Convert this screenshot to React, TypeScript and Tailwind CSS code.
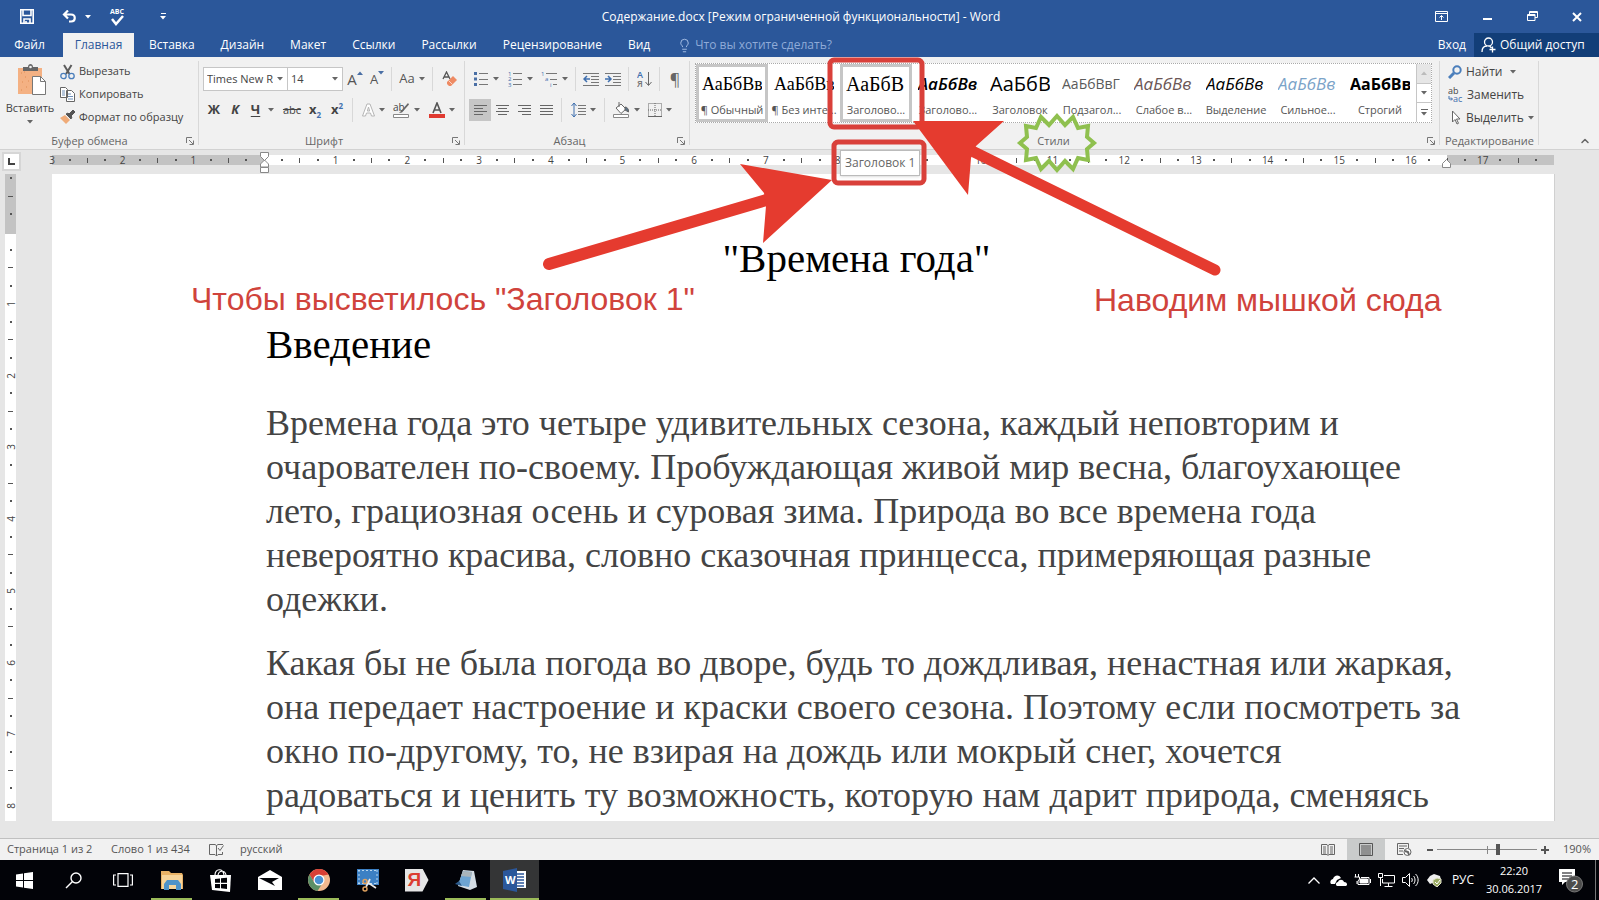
import type { ReactNode } from 'react';
import { ChevronUp, Lightbulb } from 'lucide-react';

const tabs = ['Вставка', 'Дизайн', 'Макет', 'Ссылки', 'Рассылки', 'Рецензирование', 'Вид'];

const styleItems = [
  { name: '¶ Обычный', sample: 'АаБбВвГ', look: 'font-["Liberation_Serif",serif] text-[18px] text-black', ring: true },
  { name: '¶ Без инте...', sample: 'АаБбВвГ', look: 'font-["Liberation_Serif",serif] text-[18px] text-black' },
  { name: 'Заголово...', sample: 'АаБбВ', look: 'font-["Liberation_Serif",serif] text-[20px] text-black', ring: true },
  { name: 'Заголово...', sample: 'АаБбВвГ', look: 'font-semibold italic text-[17px] text-black' },
  { name: 'Заголовок', sample: 'АаБбВ', look: 'text-[20px] text-black' },
  { name: 'Подзагол...', sample: 'АаБбВвГ', look: 'text-[14px] text-[#5a5a5a]' },
  { name: 'Слабое в...', sample: 'АаБбВв', look: 'italic text-[17px] text-[#6b5656]' },
  { name: 'Выделение', sample: 'АаБбВв', look: 'italic text-[17px] text-black' },
  { name: 'Сильное...', sample: 'АаБбВв', look: 'italic text-[17px] text-[#7ba3c8]' },
  { name: 'Строгий', sample: 'АаБбВв', look: 'font-bold text-[16px] text-black' },
];

const firstParagraph = [
  'Времена года это четыре удивительных сезона, каждый неповторим и',
  'очарователен по-своему. Пробуждающая живой мир весна, благоухающее',
  'лето, грациозная осень и суровая зима. Природа во все времена года',
  'невероятно красива, словно сказочная принцесса, примеряющая разные',
  'одежки.',
];

const secondParagraph = [
  'Какая бы не была погода во дворе, будь то дождливая, ненастная или жаркая,',
  'она передает настроение и краски своего сезона. Поэтому если посмотреть за',
  'окно по-другому, то, не взирая на дождь или мокрый снег, хочется',
  'радоваться и ценить ту возможность, которую нам дарит природа, сменяясь',
];

function Caret({ className = 'text-[#666]' }: { className?: string }) {
  return (
    <svg width="6" height="4" viewBox="0 0 6 4" className={`shrink-0 ${className}`}>
      <path d="M0 0h6L3 3.5z" fill="currentColor" />
    </svg>
  );
}

function Sep() {
  return <span className="mx-1 h-6 w-px shrink-0 bg-[#d8d8d8]" />;
}

function Launcher({ label }: { label: string }) {
  return (
    <button aria-label={label} className="absolute right-1 bottom-[3px] p-px">
      <svg width="8" height="8" viewBox="0 0 8 8" fill="none" stroke="#777">
        <path d="M.5 6V.5H6M3 3l4 4M7.500 3.500v4h-4" />
      </svg>
    </button>
  );
}

function Group({ name, className, launcher, children }: { name: string; className: string; launcher?: boolean; children: ReactNode }) {
  return (
    <section aria-label={name} className={`relative flex flex-col ${className}`}>
      <div className="flex-1">{children}</div>
      <h2 className={`h-4 text-center text-[11px] leading-4 whitespace-nowrap text-[#666] ${launcher ? 'pr-5' : ''}`}>{name}</h2>
      {launcher && <Launcher label={`Параметры: ${name}`} />}
      <span className="absolute top-1 right-0 bottom-1 w-px bg-[#d8d8d8]" />
    </section>
  );
}

function Tool({ label, className = 'w-[22px]', caret, children }: { label: string; className?: string; caret?: boolean; children: ReactNode }) {
  return (
    <button aria-label={label} className={`flex h-[22px] shrink-0 items-center justify-center gap-1 ${className}`}>
      {children}
      {caret && <Caret />}
    </button>
  );
}

function Lines({ d }: { d: string }) {
  return (
    <svg width="15" height="14" viewBox="0 0 15 14" fill="none" stroke="#666">
      <path d={d} />
    </svg>
  );
}

function Clipboard() {
  return (
    <Group name="Буфер обмена" className="w-[199px]" launcher>
      <div className="flex pt-[3px]">
        <button className="flex w-[60px] flex-col items-center pt-1 text-[11px] leading-4 text-[#444]">
          <svg width="30" height="32" viewBox="0 0 30 32" className="ml-1">
            <path d="M1 4h24v26H1z" fill="#f4b183" />
            <path d="M4 9h1M8 13h1M5 18h1M9 23h1M4 26h1M11 17h1M7 8h1" stroke="#e08d55" />
            <path d="M6 3h5c0-4 5-4 5 0h5v4H6z" fill="#666" />
            <circle cx="13.500" cy="3" r="1.300" fill="#f1f1f1" />
            <path d="M15.500 12.500h8l5 5v13h-13z" fill="#fff" stroke="#777" />
            <path d="M23.500 12.500v5h5" fill="none" stroke="#777" />
          </svg>
          <span className="mt-1">Вставить</span>
          <Caret className="mt-1 text-[#666]" />
        </button>
        <div className="flex flex-col text-[11px] text-[#444]">
          <button className="flex h-[23px] items-center gap-1 whitespace-nowrap">
            <svg width="15" height="16" viewBox="0 0 15 16" fill="none">
              <path d="M4 1l5.500 9M11.500 1L6 10" stroke="#5c5c5c" strokeWidth="2" />
              <circle cx="3.500" cy="12" r="2.700" stroke="#4a7ebb" strokeWidth="1.300" />
              <circle cx="11.500" cy="12" r="2.700" stroke="#4a7ebb" strokeWidth="1.300" />
            </svg>
            Вырезать
          </button>
          <button className="flex h-[23px] items-center gap-1 whitespace-nowrap">
            <svg width="15" height="15" viewBox="0 0 15 15" fill="#fff" stroke="#666">
              <path d="M.5.5h5l2 2v8h-7zM6.500 3.500h5l3 3v8h-8z" />
              <path d="M2 4h3M2 6h3M2 8h3M8 7h3M8 9.500h5M8 12h5" stroke="#6d8fb8" />
            </svg>
            Копировать
          </button>
          <button className="flex h-[23px] items-center gap-1 whitespace-nowrap">
            <svg width="15" height="15" viewBox="0 0 15 15">
              <path d="M5 5l5 5-4 4-6-6z" fill="#f0ab78" />
              <path d="M6 4l5 5 1-2-4-4zM9 4l4-4 2 2-4 4z" fill="#555" stroke="#555" />
            </svg>
            Формат по образцу
          </button>
        </div>
      </div>
    </Group>
  );
}

function FontGroup() {
  return (
    <Group name="Шрифт" className="w-[266px] pl-1" launcher>
      <div className="flex h-11 items-center">
        <div className="flex h-6 w-[85px] shrink-0 items-center border border-[#c6c6c6] bg-white pr-1">
          <input aria-label="Шрифт" defaultValue="Times New Roman" className="w-0 flex-1 pl-[3px] text-[11px] text-[#444] outline-none" />
          <Caret className="ml-1 text-[#666]" />
        </div>
        <div className="-ml-px flex h-6 w-[56px] shrink-0 items-center border border-[#c6c6c6] bg-white pr-1">
          <input aria-label="Размер шрифта" defaultValue="14" className="w-0 flex-1 pl-[3px] text-[11px] text-[#444] outline-none" />
          <Caret />
        </div>
        <Tool label="Увеличить размер" className="w-6">
          <span className="flex text-[15px] leading-4 text-[#555]">A<Caret className="rotate-180 text-[#4a6fa5]" /></span>
        </Tool>
        <Tool label="Уменьшить размер" className="w-5">
          <span className="flex text-[13px] leading-4 text-[#555]">A<Caret className="text-[#4a6fa5]" /></span>
        </Tool>
        <Sep />
        <Tool label="Регистр" className="w-8" caret><span className="text-[13px] text-[#555]">Aa</span></Tool>
        <Sep />
        <Tool label="Очистить формат" className="w-6">
          <svg width="15" height="16" viewBox="0 0 15 16">
            <path d="M1 8l3.500-7L8 8M2 6h5" fill="none" stroke="#555" strokeWidth="1.300" />
            <path d="M5 11l6-6 4 4-6 6H7l-2-2z" fill="#ee8a63" />
            <path d="M6.500 9.500l4 4" stroke="#f9d5c6" />
          </svg>
        </Tool>
      </div>
      <div className="-mt-[3px] flex items-center text-[13px] text-[#444]">
        <Tool label="Полужирный"><b>Ж</b></Tool>
        <Tool label="Курсив" className="w-5"><b className="italic">К</b></Tool>
        <Tool label="Подчеркнутый" className="w-[35px]" caret><b className="mr-1 underline underline-offset-2">Ч</b></Tool>
        <Tool label="Зачеркнутый" className="w-6"><span className="text-[11px] line-through">abc</span></Tool>
        <Tool label="Подстрочный"><b>x<span className="align-sub text-[8px] text-[#3f6fae]">2</span></b></Tool>
        <Tool label="Надстрочный"><b>x<span className="align-super text-[8px] text-[#3f6fae]">2</span></b></Tool>
        <Sep />
        <Tool label="Эффекты" className="w-8" caret>
          <svg width="13" height="14" viewBox="0 0 13 14" fill="#fff" stroke="#b5b5b5">
            <path d="M5 1h3l4.500 12h-3l-1-3h-4l-1 3h-3zM6.500 4l-1.200 4h2.400z" />
          </svg>
        </Tool>
        <Tool label="Цвет выделения" className="w-[35px]" caret>
          <svg width="17" height="16" viewBox="0 0 17 16">
            <text x="0" y="9" fontSize="10" fill="#444">ab</text>
            <path d="M15 1L8 9l-2 2 3-.5 7-8z" fill="#666" />
            <path d="M.5 12.500h15v3H.5z" fill="#fff" stroke="#888" />
          </svg>
        </Tool>
        <Tool label="Цвет шрифта" className="w-[35px]" caret>
          <svg width="16" height="16" viewBox="0 0 16 16">
            <path d="M4 11L8 1l4 10M5.500 8h5" fill="none" stroke="#555" strokeWidth="1.600" />
            <path d="M0 12h16v4H0z" fill="#e03a30" />
          </svg>
        </Tool>
      </div>
    </Group>
  );
}

function ParagraphGroup() {
  return (
    <Group name="Абзац" className="w-[225px] pl-1" launcher>
      <div className="flex h-11 items-center">
        <Tool label="Маркеры" className="w-[34px]" caret>
          <svg width="15" height="16" viewBox="0 0 15 16">
            <path d="M0 1h3v3H0zM0 6.500h3v3H0zM0 12h3v3H0z" fill="#4a6fa5" />
            <path d="M5 2.500h9M5 8.500h9M5 13.500h9" stroke="#777" />
          </svg>
        </Tool>
        <Tool label="Нумерация" className="w-[34px]" caret>
          <svg width="15" height="16" viewBox="0 0 15 16" fontSize="6" fill="#3f6fae">
            <text x="0" y="5">1</text><text x="0" y="10">2</text><text x="0" y="16">3</text>
            <path d="M5 2.500h9M5 8.500h9M5 13.500h9" stroke="#777" />
          </svg>
        </Tool>
        <Tool label="Многоуровневый список" className="w-[34px]" caret>
          <svg width="17" height="16" viewBox="0 0 17 16" fontSize="6" fill="#3f6fae">
            <text x="0" y="5">1</text><text x="4" y="10">a</text><text x="9" y="16">i</text>
            <path d="M5 2.500h11M9 8.500h7M12 13.500h4" stroke="#777" />
          </svg>
        </Tool>
        <Sep />
        <Tool label="Уменьшить отступ">
          <svg width="16" height="14" viewBox="0 0 16 14" fill="none" stroke="#777">
            <path d="M0 1.500h16M8 4.500h8M8 7.500h8M8 10.500h8M0 13.500h16" />
            <path d="M4 4L1 7l3 3M1 7h6" stroke="#3f6fae" strokeWidth="1.500" />
          </svg>
        </Tool>
        <Tool label="Увеличить отступ">
          <svg width="16" height="14" viewBox="0 0 16 14" fill="none" stroke="#777">
            <path d="M0 1.500h16M8 4.500h8M8 7.500h8M8 10.500h8M0 13.500h16" />
            <path d="M3 4l3 3-3 3M6 7H0" stroke="#3f6fae" strokeWidth="1.500" />
          </svg>
        </Tool>
        <Sep />
        <Tool label="Сортировка">
          <svg width="15" height="17" viewBox="0 0 15 17" fontSize="9" fontWeight="600">
            <text x="0" y="7" fill="#3f6fae">А</text><text x="0" y="16" fill="#777">Я</text>
            <path d="M11.500 1v13M8.500 11l3 3.500 3-3.500" fill="none" stroke="#666" />
          </svg>
        </Tool>
        <Sep />
        <Tool label="Знаки абзаца"><span className="text-[16px] text-[#666]">¶</span></Tool>
      </div>
      <div className="-mt-[3px] flex items-center">
        <Tool label="По левому краю" className="w-[22px] bg-[#c6c6c6]"><Lines d="M1 2.500h13M1 5.500h9M1 8.500h13M1 11.500h9" /></Tool>
        <Tool label="По центру"><Lines d="M1 2.500h13M3 5.500h9M1 8.500h13M3 11.500h9" /></Tool>
        <Tool label="По правому краю"><Lines d="M1 2.500h13M5 5.500h9M1 8.500h13M5 11.500h9" /></Tool>
        <Tool label="По ширине"><Lines d="M1 2.500h13M1 5.500h13M1 8.500h13M1 11.500h13" /></Tool>
        <Sep />
        <Tool label="Интервал" className="w-[34px]" caret>
          <svg width="15" height="16" viewBox="0 0 15 16" fill="none" stroke="#777">
            <path d="M7 3.500h8M7 6.500h8M7 9.500h8M7 12.500h8" />
            <path d="M3 1v14M.5 4L3 1l2.500 3M.5 12L3 15l2.500-3" stroke="#3f6fae" />
          </svg>
        </Tool>
        <Sep />
        <Tool label="Заливка" className="w-[34px]" caret>
          <svg width="17" height="16" viewBox="0 0 17 16">
            <path d="M3 6l5-4 5 5-5 4.500z" fill="#fff" stroke="#666" />
            <path d="M6 5V0M12 5c2 0 4 2 3.500 5L12 8z" fill="#5b7186" stroke="#666" />
            <path d="M.5 12.500h15v3H.5z" fill="#fff" stroke="#888" />
          </svg>
        </Tool>
        <Tool label="Границы" className="w-[34px]" caret>
          <svg width="14" height="14" viewBox="0 0 14 14" fill="none" stroke="#666">
            <path d="M.5.5h13v13H.5zM7 0v14M0 7h14" strokeDasharray="1 1" />
            <path d="M0 13.500h14" />
          </svg>
        </Tool>
      </div>
    </Group>
  );
}

function StylesGroup() {
  return (
    <Group name="Стили" className="min-w-0 flex-1 pr-2 pl-[5px]" launcher>
      <div className="mt-[6px] flex h-[60px] border border-dotted border-[#aaa] bg-white">
        <div className="flex flex-1 overflow-hidden">
          {styleItems.map((item, i) => (
            <button
              key={i}
              className={`flex w-[72px] shrink-0 flex-col overflow-hidden ${item.ring ? 'border-[3px] border-[#c6c6c6] px-[3px]' : 'px-[6px] py-[3px]'}`}
            >
              <span className={`block h-[34px] w-full overflow-hidden text-left leading-[34px] whitespace-nowrap ${item.look}`}>{item.sample}</span>
              <span className="-mx-1 self-center text-[11px] leading-[18px] whitespace-nowrap text-[#555]">{item.name}</span>
            </button>
          ))}
        </div>
        <div className="flex w-[15px] flex-col border-l border-[#c6c6c6]">
          <button aria-label="Вверх" className="flex flex-1 items-center justify-center bg-[#e6e6e6]"><Caret className="rotate-180 text-[#bbb]" /></button>
          <button aria-label="Вниз" className="flex flex-1 items-center justify-center border-y border-[#c6c6c6]"><Caret /></button>
          <button aria-label="Все стили" className="flex flex-1 flex-col items-center justify-center gap-[2px]">
            <span className="h-px w-[7px] bg-[#666]" />
            <Caret />
          </button>
        </div>
      </div>
    </Group>
  );
}

function EditingGroup() {
  return (
    <Group name="Редактирование" className="w-[99px]">
      <div className="flex flex-col pt-[3px] pl-2 text-[12px] text-[#444]">
        <button className="flex h-[23px] items-center gap-1">
          <svg width="14" height="14" viewBox="0 0 14 14" fill="none" stroke="#4a7ebb" strokeWidth="2">
            <circle cx="9" cy="5" r="3.700" /><path d="M6 8l-5 5" strokeWidth="3" />
          </svg>
          Найти
          <Caret className="ml-1 text-[#666]" />
        </button>
        <button className="flex h-[23px] items-center gap-1">
          <svg width="15" height="16" viewBox="0 0 15 16" fontSize="9">
            <text x="0" y="7" fill="#444">ab</text><text x="5" y="15" fill="#3f6fae">ac</text>
            <path d="M1 9v3h3M3 10.500L4.500 12 3 13.500" fill="none" stroke="#3f6fae" />
          </svg>
          Заменить
        </button>
        <button className="flex h-[23px] items-center gap-1">
          <svg width="14" height="15" viewBox="0 0 14 15" fill="#fff" stroke="#666">
            <path d="M4.500 1v11l2.500-2.500 2 4.500 1.500-.7-2-4.300H12z" />
          </svg>
          Выделить
          <Caret />
        </button>
      </div>
    </Group>
  );
}

// One mark for every quarter of a centimetre, counted outwards from the text edge.
function Marks({ from, to, vertical }: { from: number; to: number; vertical?: boolean }) {
  const marks = Array.from({ length: to - from + 1 }, (_, i) => from + i);
  return marks.map((q) => {
    const n = Math.abs(q);
    const numbered = n % 4 === 0;
    return (
      <span
        key={q}
        className={
          vertical
            ? 'flex h-0 w-full items-center justify-center'
            : 'flex h-full w-0 items-center justify-center'
        }
      >
        {numbered && n > 0 && n < 72 && <span className={`text-[10px] leading-none text-[#444] ${vertical ? '-rotate-90' : ''}`}>{n / 4}</span>}
        {!numbered && (
          <span
            className={`shrink-0 bg-[#555] ${n % 2 ? 'size-[2px]' : vertical ? 'h-px w-[5px]' : 'h-[5px] w-px'}`}
          />
        )}
      </span>
    );
  });
}

function HorizontalRuler() {
  return (
    <div className="flex h-6 shrink-0 items-start pr-[45px]">
      <button aria-label="Табуляция" className="mt-[2px] mr-[31px] ml-[2px] flex size-[19px] shrink-0 items-center justify-center border-2 border-[#d6d6d6] bg-white">
        <svg width="7" height="7" viewBox="0 0 7 7"><path d="M1 0v6h6" fill="none" stroke="#444" strokeWidth="2" /></svg>
      </button>
      <div className="relative mt-[5px] flex h-[10px] min-w-0 flex-1">
        <div className="flex w-[212px] shrink-0 justify-between bg-[#c3c3c3]"><Marks from={-12} to={0} /></div>
        <div className="flex flex-1 justify-between bg-white"><Marks from={0} to={65} /><span className="w-0" /></div>
        <div className="flex w-[107px] shrink-0 justify-between bg-[#c3c3c3]"><Marks from={66} to={72} /></div>
        <svg width="9" height="22" viewBox="0 0 9 22" fill="#fff" stroke="#888" className="absolute -top-[3px] left-[208px]">
          <path d="M.5.5h8v4l-4 4-4-4zM.5 15v-3l4-4 4 4v3zM.5 15.500h8v5h-8z" />
        </svg>
        <svg width="9" height="9" viewBox="0 0 9 9" fill="#fff" stroke="#888" className="absolute top-1 right-[103px]">
          <path d="M.5 8.500v-4l4-4 4 4v4z" />
        </svg>
      </div>
    </div>
  );
}

function VerticalRuler() {
  return (
    <div className="ml-[5px] w-[11px] shrink-0 overflow-hidden bg-white">
      <div className="flex h-[60px] flex-col justify-between bg-[#c3c3c3] pt-1 pb-[2px]"><Marks from={-3} to={0} vertical /></div>
      <div className="-mt-[2px] flex h-[592px] flex-col justify-between"><Marks from={0} to={33} vertical /></div>
    </div>
  );
}

function DocumentPage() {
  return (
    <main className="ml-[36px] flex-1 overflow-hidden border-r border-[#d0d0d0] bg-white pr-[107px] pl-[214px] font-['Liberation_Serif',serif]">
      <h1 className="mt-[62px] text-center text-[41px] leading-[44px] text-black">"Времена года"</h1>
      <h2 className="mt-[42px] text-[41px] leading-[44px] text-black">Введение</h2>
      <p className="mt-[35px] text-[36px] leading-[44px] text-[#444]">
        {firstParagraph.map((line) => <span key={line} className="block whitespace-nowrap">{line}</span>)}
      </p>
      <p className="mt-5 text-[36px] leading-[44px] text-[#444]">
        {secondParagraph.map((line) => <span key={line} className="block whitespace-nowrap">{line}</span>)}
      </p>
    </main>
  );
}

function StatusBar() {
  return (
    <footer className="flex h-[22px] shrink-0 items-center border-t border-[#c0c0c0] bg-[#f1f1f1] pl-[7px] text-[11px] text-[#555]">
      <span className="w-[104px] whitespace-nowrap">Страница 1 из 2</span>
      <span className="w-[98px] whitespace-nowrap">Слово 1 из 434</span>
      <button aria-label="Правописание" className="mr-4">
        <svg width="15" height="14" viewBox="0 0 15 14" fill="none" stroke="#666">
          <path d="M7.500 2.500L6 1.500H.5v10H6l1.500 1.500V2.500L9 1.500h5M7.500 13L9 11.500h4.500V9M9 5l2 2.500 3.500-5" />
        </svg>
      </button>
      <button>русский</button>
      <div className="ml-auto flex h-full items-center">
        <button aria-label="Режим чтения" className="flex h-full w-[38px] items-center justify-center">
          <svg width="14" height="12" viewBox="0 0 14 12" fill="none" stroke="#666">
            <path d="M.5.500H6l1 1 1-1h5.500v10H8l-1 1-1-1H.5zM7 1v10M2 3h3M2 5h3M2 7h3M2 9h3M9 3h3M9 5h3M9 7h3M9 9h3" />
          </svg>
        </button>
        <button aria-label="Разметка страницы" className="flex h-full w-[38px] items-center justify-center bg-[#c9cbcb]">
          <svg width="14" height="13" viewBox="0 0 14 13" fill="none" stroke="#555">
            <path d="M.5.500h13v12H.5zM2 3h10M2 5h10M2 7h10M2 9h10M2 11h10" />
          </svg>
        </button>
        <button aria-label="Веб-документ" className="flex h-full w-[38px] items-center justify-center">
          <svg width="15" height="13" viewBox="0 0 15 13" fill="none" stroke="#666">
            <path d="M6 11.500H.5V.5h11V5M2 3h8M2 5.500h5M2 8h4" />
            <circle cx="10.500" cy="9" r="3.500" fill="#fff" /><path d="M8 8l3 1 1 3" strokeWidth="2" />
          </svg>
        </button>
        <button aria-label="Уменьшить" className="flex w-[14px] justify-center"><span className="h-[2px] w-[6px] bg-[#555]" /></button>
        <div className="relative flex w-[100px] items-center">
          <span className="absolute left-1/2 h-2 w-px bg-[#888]" />
          <input
            type="range"
            aria-label="Масштаб"
            min="0"
            max="100"
            defaultValue="61"
            className="h-px w-full appearance-none bg-[#888] [&::-webkit-slider-thumb]:h-[11px] [&::-webkit-slider-thumb]:w-1 [&::-webkit-slider-thumb]:appearance-none [&::-webkit-slider-thumb]:bg-[#555]"
          />
        </div>
        <button aria-label="Увеличить" className="ml-1 flex justify-center">
          <svg width="8" height="8" viewBox="0 0 8 8"><path d="M0 4h8M4 0v8" stroke="#555" strokeWidth="2" /></svg>
        </button>
        <button className="w-[50px] pr-2 text-right">190%</button>
      </div>
    </footer>
  );
}

function TaskButton({ label, open, active, children }: { label: string; open?: boolean; active?: boolean; children: ReactNode }) {
  return (
    <button
      aria-label={label}
      className={`relative flex h-full w-[49px] items-center justify-center ${active ? 'bg-[#343536]' : ''}`}
    >
      {children}
      {open && <span className={`absolute bottom-0 h-[2px] bg-[#9bbb59] ${active ? 'inset-x-0' : 'inset-x-1'}`} />}
    </button>
  );
}

function Taskbar() {
  return (
    <nav aria-label="Панель задач" className="flex h-10 shrink-0 items-center bg-[#020308] text-white">
      <TaskButton label="Пуск">
        <svg width="17" height="17" viewBox="0 0 17 17" fill="#fff"><path d="M0 2.500l7-1V8H0zM8 1.300L17 0v8H8zM0 9h7v6.500l-7-1zM8 9h9v8l-9-1.300z" /></svg>
      </TaskButton>
      <TaskButton label="Поиск">
        <svg width="17" height="17" viewBox="0 0 17 17" fill="none" stroke="#fff" strokeWidth="1.400"><circle cx="11" cy="6" r="5" /><path d="M7.500 9.500L1 16" /></svg>
      </TaskButton>
      <TaskButton label="Представление задач">
        <svg width="20" height="14" viewBox="0 0 20 14" fill="none" stroke="#fff" strokeWidth="1.200"><path d="M5 .600h10v12.800H5zM3 2H.600v10H3M17 2h2.400v10H17" /></svg>
      </TaskButton>
      <TaskButton label="Проводник" open>
        <svg width="22" height="20" viewBox="0 0 22 20">
          <path d="M0 1h8l2 2h11l1 2v14H0z" fill="#e9b266" />
          <path d="M1 5h20v14H1z" fill="#f7d49a" />
          <path d="M6 10h11l3 4v6h-5v-5H8v5H3v-6z" fill="#4f93c9" />
        </svg>
      </TaskButton>
      <TaskButton label="Магазин">
        <svg width="21" height="23" viewBox="0 0 21 23">
          <path d="M5 6c0-7 8-7 9 0M8 6c1-5 7-5 8 0" fill="none" stroke="#fff" strokeWidth="1.200" />
          <path d="M0 6h21l-1 17-18-2z" fill="#fff" />
          <path d="M5 10l5-.5v4.300H5zM11 9.300l6-.6v5h-6zM5 15h5v4.300L5 19zM11 15h6v5l-6-.7z" fill="#020308" />
        </svg>
      </TaskButton>
      <TaskButton label="Почта">
        <svg width="24" height="20" viewBox="0 0 24 20"><path d="M0 7l12-7 12 7v13H0z" fill="#fff" /><path d="M1 8h20l-7 4 3 4z" fill="#020308" /></svg>
      </TaskButton>
      <TaskButton label="Chrome" open>
        <svg width="22" height="22" viewBox="0 0 22 22">
          <circle cx="11" cy="11" r="11" fill="#f3b98f" />
          <path d="M1.500 5.500a11 11 0 0119 0l-5 1H11L6 13z" fill="#d93f35" />
          <path d="M1.500 5.500a11 11 0 008 16.400L14 15l-8-2z" fill="#5c8f67" />
          <circle cx="11" cy="11" r="5.500" fill="#fff" /><circle cx="11" cy="11" r="4.300" fill="#4a90d2" />
        </svg>
      </TaskButton>
      <TaskButton label="Ножницы">
        <svg width="22" height="24" viewBox="0 0 22 24">
          <path d="M0 1h22v16H0z" fill="#3c80c4" /><path d="M1 2.500h20M1 15.500h20M2 2v14M20 2v14" stroke="#b7d6f0" strokeDasharray="2 2" />
          <path d="M10 14l9 6M13 11l-4 8" stroke="#e8e8e8" strokeWidth="1.700" />
          <circle cx="8" cy="13.500" r="2" fill="none" stroke="#dfa15f" strokeWidth="1.500" /><circle cx="8" cy="21" r="2" fill="none" stroke="#dfa15f" strokeWidth="1.500" />
        </svg>
      </TaskButton>
      <TaskButton label="Яндекс">
        <span className="flex h-[23px] w-6 items-center bg-[#e6e6e6] pl-[3px] font-['Liberation_Sans',sans-serif] text-[19px] font-bold text-[#dc3d31] [clip-path:polygon(0_0,75%_0,100%_50%,75%_100%,0_100%)]">Я</span>
      </TaskButton>
      <TaskButton label="Блокнот" open>
        <svg width="22" height="22" viewBox="0 0 22 22">
          <path d="M8 1l11 1 3 16-7 3L3 17z" fill="#d4dde4" /><path d="M8 2l9 1-3 15-11-2z" fill="#6da5d3" /><path d="M8 2l9 1-1 5-10-1z" fill="#a9b4ba" /><path d="M0 15l4-3 3 5z" fill="#2d5c8c" />
        </svg>
      </TaskButton>
      <TaskButton label="Word" open active>
        <svg width="24" height="24" viewBox="0 0 24 24">
          <path d="M12 3h11v17H12z" fill="#fff" /><path d="M13 6h8M13 9h8M13 12h8M13 15h8M13 18h8" stroke="#2b579a" strokeWidth="1.300" />
          <path d="M0 3l14-3v24L0 21z" fill="#2b579a" />
          <text x="2" y="16" fontSize="11" fontWeight="700" fill="#fff">W</text>
        </svg>
      </TaskButton>
      <div className="ml-auto flex h-full items-center">
        <button aria-label="Скрытые значки" className="flex w-6 justify-center">
          <svg width="12" height="7" viewBox="0 0 12 7" fill="none" stroke="#fff" strokeWidth="1.300"><path d="M.5 6.500L6 1l5.500 5.500" /></svg>
        </button>
        <button aria-label="OneDrive" className="flex w-6 justify-center">
          <svg width="17" height="11" viewBox="0 0 17 11" fill="#fff"><path d="M1 9C-1 6 2 4 3 4c1-4 6-5 8-1L7 5 5 9z" /><path d="M7 11c-2-1-1-4 1-4 1-3 5-3 6 0 3 0 4 3 2 4z" /></svg>
        </button>
        <button aria-label="Питание" className="flex w-6 justify-center">
          <svg width="17" height="12" viewBox="0 0 17 12" fill="none" stroke="#fff"><path d="M1.500 0v3M4.500 0v3M.5 3h5v2L4 7v3.500h11v-7H7M3 7v3M16.500 5v4" /><path d="M6 5h7.500v4H6z" fill="#fff" /></svg>
        </button>
        <button aria-label="Сеть" className="flex w-6 justify-center">
          <svg width="17" height="14" viewBox="0 0 17 14" fill="none" stroke="#fff"><path d="M.5.500h4v4h-4zM6 2.500h10.500v7.500H4.500V6M10.500 10v3.500M6.500 13.500h8M2.500 5v8" /></svg>
        </button>
        <button aria-label="Громкость" className="flex w-6 justify-center">
          <svg width="17" height="14" viewBox="0 0 17 14" fill="none" stroke="#fff"><path d="M.5 4.500h3l4-4v13l-4-4h-3zM9.500 5c1 1 1 3 0 4M11.500 3c2 2 2 6 0 8M13.500 1c3.500 3 3.500 9 0 12" /></svg>
        </button>
        <button aria-label="Защита" className="flex w-6 justify-center">
          <svg width="15" height="13" viewBox="0 0 15 13"><path d="M0 6l3-4 4-2 6 2 1 4-6 2-5 2z" fill="#eee" /><path d="M6 6l4-2 4 1v4l-4 4-4-3z" fill="#9aaa62" stroke="#e6e6d0" /><path d="M8 8l2 2 3-4" fill="none" stroke="#fff" /></svg>
        </button>
        <button className="w-[34px] text-center text-[12px]">РУС</button>
        <div className="w-[68px] text-center text-[11px] leading-[18px]">
          <div>22:20</div>
          <div>30.06.2017</div>
        </div>
        <button aria-label="Уведомления" className="mr-[11px] ml-[10px] flex">
          <svg width="26" height="25" viewBox="0 0 26 25">
            <path d="M1 1h16v13H7l-3 3v-3H1z" fill="#fff" /><path d="M4 5h10M4 8h10M4 11h6" stroke="#020308" />
            <circle cx="16.500" cy="16" r="8" fill="#4c4c4c" stroke="#777" />
            <text x="13" y="21" fontSize="13" fill="#fff">2</text>
          </svg>
        </button>
        <span className="mr-[3px] h-full w-px bg-[#777]" />
      </div>
    </nav>
  );
}

function Annotations() {
  return (
    <div className="pointer-events-none absolute inset-0">
      <div className="absolute top-[150px] left-[840px] border border-[#bbb] bg-white px-1 text-[12px] leading-6 whitespace-nowrap text-[#666] shadow-sm">
        Заголовок 1
      </div>
      <svg className="absolute inset-0 size-full" fill="none">
        <rect x="830" y="60" width="92" height="67" rx="4" stroke="#d9403a" strokeWidth="5" />
        <rect x="834" y="142" width="90" height="41" rx="4" stroke="#d9403a" strokeWidth="5" />
        <path d="M549 264L770 199" stroke="#e53b2f" strokeWidth="12" strokeLinecap="round" />
        <path d="M740 164l92 16-69 63 3-37-2-13z" fill="#e53b2f" />
        <path d="M1215 270L970 150" stroke="#e53b2f" strokeWidth="11" strokeLinecap="round" />
        <path d="M913 121h91l-28 25-5 12-3 37z" fill="#e53b2f" />
        <path
          d="M1057 116l8 9 8-8 5 11 10-2-1 11 7 6-7 6 1 11-10-2-5 11-8-8-8 9-8-9-8 8-5-11-10 2 1-11-7-6 7-6-1-11 10 2 5-11 8 8z"
          stroke="#8fc04f"
          strokeWidth="4"
        />
      </svg>
      <p className="absolute top-[281px] left-[191px] font-['Liberation_Sans',sans-serif] text-[32px] leading-9 whitespace-nowrap text-[#d0433c]">
        Чтобы высветилось "Заголовок 1"
      </p>
      <p className="absolute top-[282px] left-[1094px] font-['Liberation_Sans',sans-serif] text-[32px] leading-9 whitespace-nowrap text-[#d0433c]">
        Наводим мышкой сюда
      </p>
    </div>
  );
}

function TitleBar() {
  return (
    <div className="flex h-[33px] items-center text-white">
      <div className="flex flex-1 items-center pl-5">
        <button aria-label="Сохранить">
          <svg width="14" height="15" viewBox="0 0 14 15" fill="none" stroke="#fff" strokeWidth="1.600"><path d="M.8.800h12.400v13.400H.8zM3 1v5.500h8V1M4 14v-4h6v4M6 12v2" /></svg>
        </button>
        <button aria-label="Отменить" className="ml-[28px] flex items-center gap-2">
          <svg width="15" height="13" viewBox="0 0 15 13" fill="none" stroke="#fff" strokeWidth="2.200"><path d="M6 .500L2 4.500l4 4M2 4.500h7c5 0 5 7 0 7H7" /></svg>
          <Caret className="text-white" />
        </button>
        <button aria-label="Правописание" className="ml-[18px] flex">
          <svg width="16" height="18" viewBox="0 0 16 18" fill="none">
            <text x="1" y="6" fontSize="7" fontWeight="700" fill="#fff">ABC</text>
            <path d="M3 11l4 5 7-8" stroke="#fff" strokeWidth="2.500" />
          </svg>
        </button>
        <button aria-label="Настройка панели" className="ml-[35px] flex flex-col items-center gap-[2px]">
          <span className="h-px w-[5px] bg-white" /><Caret className="text-white" />
        </button>
      </div>
      <h1 className="text-[12px] whitespace-nowrap">Содержание.docx [Режим ограниченной функциональности] - Word</h1>
      <div className="flex flex-1 items-center justify-end gap-[34px] pr-[17px]">
        <button aria-label="Параметры ленты">
          <svg width="13" height="11" viewBox="0 0 13 11" fill="none" stroke="#fff"><path d="M.5.500h12v10H.5zM1 2.500h11M6.500 9V4.500M4.500 6.500l2-2 2 2" /></svg>
        </button>
        <button aria-label="Свернуть" className="px-px"><span className="mt-1 block h-[2px] w-[9px] bg-white" /></button>
        <button aria-label="Восстановить">
          <svg width="11" height="11" viewBox="0 0 11 11" fill="none" stroke="#fff"><path d="M2.500 3V.500h8v6H8M.5 3.500h7.500v6H.5zM.5 4.500H8M3 1.500h7" /></svg>
        </button>
        <button aria-label="Закрыть">
          <svg width="10" height="10" viewBox="0 0 10 10" fill="none" stroke="#fff" strokeWidth="2"><path d="M1 1l8 8M9 1L1 9" /></svg>
        </button>
      </div>
    </div>
  );
}

function TabBar() {
  return (
    <div className="flex h-6 items-stretch text-[12px] whitespace-nowrap text-white">
      <button className="w-[63px] pr-1">Файл</button>
      <button className="mr-[2px] w-[71px] bg-[#f1f1f1] text-[#2b579a]">Главная</button>
      {tabs.map((tab) => <button key={tab} className="px-[13px]">{tab}</button>)}
      <label className="ml-[14px] flex items-center gap-[3px] text-[#a9c1e6]">
        <Lightbulb size={15} strokeWidth={1.500} />
        <input placeholder="Что вы хотите сделать?" className="w-40 placeholder:text-[#8fabd8] outline-none" />
      </label>
      <button className="ml-auto px-2">Вход</button>
      <button className="flex w-[125px] items-center gap-1 bg-[#123e78] pl-[7px]">
        <svg width="15" height="16" viewBox="0 0 15 16" fill="none" stroke="#fff" strokeWidth="1.300">
          <circle cx="7.500" cy="5" r="4" /><path d="M1 15c0-4 2-6 5-6M8.500 9l2 2M11.500 9.500v6M8.500 12.500h6" />
        </svg>
        Общий доступ
      </button>
    </div>
  );
}

export default function App() {
  return (
    <div className="relative flex h-screen flex-col overflow-hidden bg-[#e6e6e6] font-['Open_Sans','Noto_Sans',sans-serif]">
      <header className="shrink-0 bg-[#2b579a]">
        <TitleBar />
        <TabBar />
      </header>
      <div className="flex h-[93px] shrink-0 border-b border-[#d2d2d2] bg-[#f1f1f1]">
        <Clipboard />
        <FontGroup />
        <ParagraphGroup />
        <StylesGroup />
        <EditingGroup />
        <div className="flex w-[60px] shrink-0 items-end justify-end pr-2 pb-[2px]">
          <button aria-label="Свернуть ленту"><ChevronUp size={12} strokeWidth={3} className="text-[#666]" /></button>
        </div>
      </div>
      <HorizontalRuler />
      <div className="flex min-h-0 flex-1 pr-[44px]">
        <VerticalRuler />
        <DocumentPage />
      </div>
      <div className="h-[17px] shrink-0" />
      <StatusBar />
      <Taskbar />
      <Annotations />
    </div>
  );
}
